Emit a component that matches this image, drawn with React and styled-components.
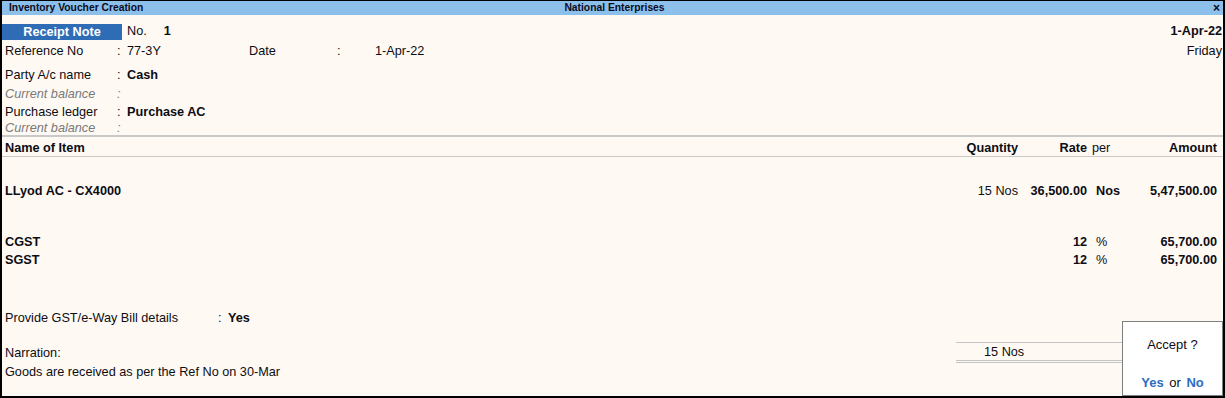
import React from "react";
import styled, { createGlobalStyle } from "styled-components";

const GlobalStyle = createGlobalStyle`
  html, body {
    margin: 0;
    padding: 0;
    background: #ffffff;
  }
  body {
    font-family: "Liberation Sans", Arial, sans-serif;
  }
`;

const Window = styled.div`
  position: relative;
  width: 1225px;
  height: 398px;
  box-sizing: border-box;
  border: 2px solid #000;
  border-top: 1px solid #000;
  background: #fef9f3;
  display: flex;
  flex-direction: column;
  font-size: 12.7px;
  color: #0d0d14;
  overflow: hidden;
`;

const TitleBar = styled.div`
  height: 14px;
  flex: none;
  background: #8cbfe9;
  display: grid;
  grid-template-columns: 1fr auto 1fr;
  align-items: center;
  padding: 0 3px 0 7px;
  font-size: 10.3px;
  font-weight: bold;
  color: #0b0b22;
  line-height: 14px;

  .close {
    justify-self: end;
    font-size: 12px;
  }
`;

const Row = styled.div`
  display: flex;
  align-items: center;
  box-sizing: border-box;
  height: ${(p) => p.h || 18}px;
  line-height: ${(p) => (p.h || 18) - (p.pt || 0)}px;
  padding: ${(p) => p.pt || 0}px 1px 0 3px;
  margin-top: ${(p) => p.mt || 0}px;
  white-space: nowrap;
  flex: none;
`;

const Badge = styled.div`
  width: 120px;
  height: 16px;
  line-height: 16px;
  margin-left: -3px;
  background: #2e6cb5;
  color: #fff;
  font-weight: bold;
  text-align: center;
`;

const Bold = styled.span`
  font-weight: bold;
`;

const Spacer = styled.span`
  display: inline-block;
  width: ${(p) => p.w}px;
`;

const FieldGrid = styled(Row)`
  display: grid;
  grid-template-columns: ${(p) => p.cols};
  color: ${(p) => (p.muted ? "#7a7a7a" : "inherit")};
  font-style: ${(p) => (p.muted ? "italic" : "normal")};
`;

const Right = styled.span`
  justify-self: end;
  margin-left: auto;
  font-weight: ${(p) => (p.bold ? "bold" : "normal")};
`;

const Rule = styled.div`
  flex: none;
  height: ${(p) => p.size || 1}px;
  background: #c9c9c9;
`;

const ItemRow = styled(Row)`
  display: grid;
  grid-template-columns: 1fr 100px 69px 44px 86px;
  padding-right: 6px;
  font-weight: bold;
`;

const Cell = styled.span`
  text-align: ${(p) => p.align || "right"};
  padding-left: ${(p) => p.pl || 0}px;
  font-weight: ${(p) => (p.normal ? "normal" : "bold")};
`;

const NarrationLabel = styled.span`
  padding-top: 2px;
`;

const TotalBox = styled.div`
  margin-left: auto;
  margin-right: 99px;
  width: 139px;
  height: 17px;
  line-height: 18px;
  border-top: 1px solid #c4c4c4;
  border-bottom: 3px double #c4c4c4;
  padding-left: 28px;
`;

const AcceptBox = styled.div`
  position: absolute;
  right: 0;
  bottom: 0;
  width: 101px;
  height: 75px;
  box-sizing: border-box;
  background: #fff;
  border: 1px solid #7f7f7f;
  display: flex;
  flex-direction: column;
  align-items: center;
  font-size: 13px;

  .question {
    margin-top: 14px;
    line-height: 18px;
  }

  .choices {
    margin-top: auto;
    margin-bottom: 3px;
    line-height: 18px;
    word-spacing: 2px;
  }
`;

const Choice = styled.span`
  color: #2c6dc1;
  font-weight: bold;
`;

function App() {
  return (
    <>
      <GlobalStyle />
      <Window>
        <TitleBar>
          <span>Inventory Voucher Creation</span>
          <span>National Enterprises</span>
          <span className="close">×</span>
        </TitleBar>

        <Row h={19} mt={7}>
          <Badge>Receipt Note</Badge>
          <Spacer w={5} />
          <span>No.</span>
          <Spacer w={17} />
          <Bold>1</Bold>
          <Right bold>1-Apr-22</Right>
        </Row>

        <FieldGrid cols="112px 10px 122px 88px 38px 1fr auto" h={19} pt={1}>
          <span>Reference No</span>
          <span>:</span>
          <span>77-3Y</span>
          <span>Date</span>
          <span>:</span>
          <span>1-Apr-22</span>
          <Right>Friday</Right>
        </FieldGrid>

        <FieldGrid cols="112px 10px 1fr" mt={6} h={18} pt={1}>
          <span>Party A/c name</span>
          <span>:</span>
          <Bold>Cash</Bold>
        </FieldGrid>
        <FieldGrid cols="112px 10px 1fr" mt={1} h={18} pt={1} muted>
          <span>Current balance</span>
          <span>:</span>
          <span />
        </FieldGrid>
        <FieldGrid cols="112px 10px 1fr" h={17} pt={1}>
          <span>Purchase ledger</span>
          <span>:</span>
          <Bold>Purchase AC</Bold>
        </FieldGrid>
        <FieldGrid cols="112px 10px 1fr" h={15} pt={1} muted>
          <span>Current balance</span>
          <span>:</span>
          <span />
        </FieldGrid>

        <Rule size={2} />
        <ItemRow h={19} pt={3}>
          <Cell align="left">Name of Item</Cell>
          <Cell>Quantity</Cell>
          <Cell>Rate</Cell>
          <Cell align="left" pl={5} normal>per</Cell>
          <Cell>Amount</Cell>
        </ItemRow>
        <Rule />

        <ItemRow mt={25}>
          <Cell align="left">LLyod AC - CX4000</Cell>
          <Cell normal>15 Nos</Cell>
          <Cell>36,500.00</Cell>
          <Cell align="left" pl={9}>Nos</Cell>
          <Cell>5,47,500.00</Cell>
        </ItemRow>

        <ItemRow mt={33}>
          <Cell align="left">CGST</Cell>
          <Cell />
          <Cell>12</Cell>
          <Cell align="left" pl={9} normal>%</Cell>
          <Cell>65,700.00</Cell>
        </ItemRow>
        <ItemRow>
          <Cell align="left">SGST</Cell>
          <Cell />
          <Cell>12</Cell>
          <Cell align="left" pl={9} normal>%</Cell>
          <Cell>65,700.00</Cell>
        </ItemRow>

        <FieldGrid cols="213px 10px 1fr" mt={40}>
          <span>Provide GST/e-Way Bill details</span>
          <span>:</span>
          <Bold>Yes</Bold>
        </FieldGrid>

        <Row h={21} mt={15}>
          <NarrationLabel>Narration:</NarrationLabel>
          <TotalBox>15 Nos</TotalBox>
        </Row>
        <Row>
          <span>Goods are received as per the Ref No on 30-Mar</span>
        </Row>

        <AcceptBox>
          <span className="question">Accept ?</span>
          <span className="choices">
            <Choice>Yes</Choice> or <Choice>No</Choice>
          </span>
        </AcceptBox>
      </Window>
    </>
  );
}

export default App;
